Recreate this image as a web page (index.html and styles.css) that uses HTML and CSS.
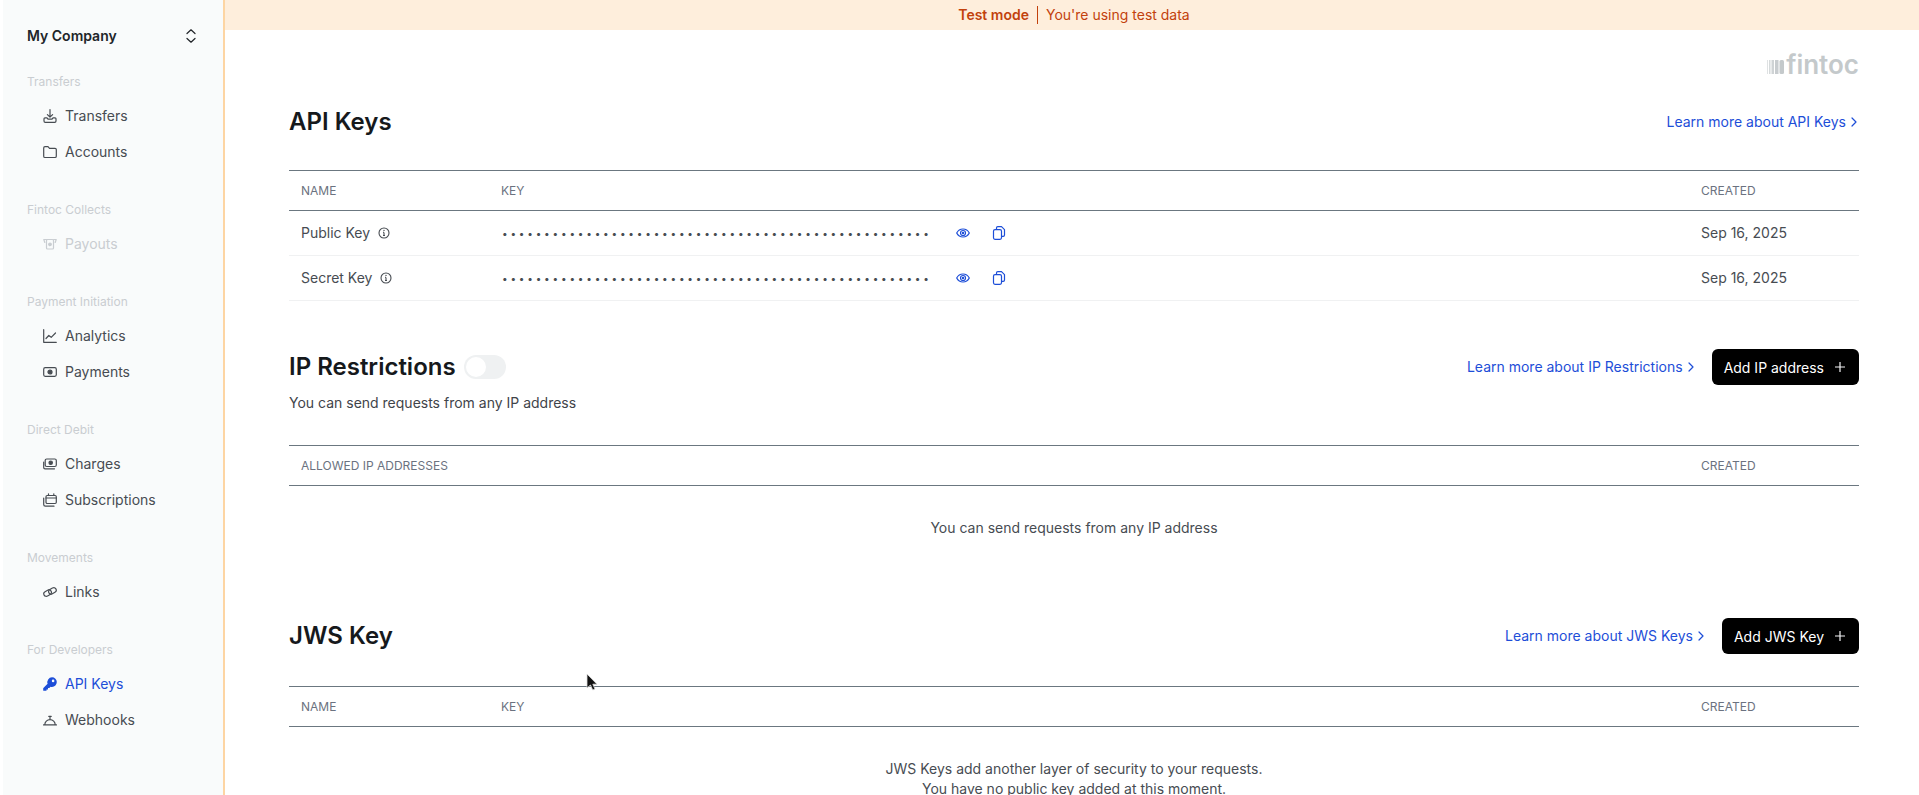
FILE: index.html
```html
<!DOCTYPE html>
<html lang="en">
<head>
    <meta charset="UTF-8">
    <title>API Keys</title>
    <link rel="stylesheet" href="styles.css">
</head>
<body>
    <aside class="sidebar">
        <div class="company">
            <span>My Company</span>
            <svg class="selector" viewBox="0 0 10 14" fill="none" stroke="#212529" stroke-width="1.2" stroke-linecap="round" stroke-linejoin="round"><path d="M1 4.500 5 .8l4 3.700M1 9.500l4 3.700 4-3.700"/></svg>
        </div>

        <div class="nav-group">
            <div class="nav-label">Transfers</div>
            <a class="nav-item"><svg class="nav-icon" viewBox="0 0 14 14"><path d="M7 .6v7.400M4.400 5.600 7 8.200l2.600-2.600M1 9.800c0-.6.400-1 1-1h2l1 1.300h4l1-1.300h2c.6 0 1 .4 1 1v2.200c0 .8-.5 1.300-1.300 1.300H2.300c-.8 0-1.300-.5-1.300-1.300z"/></svg>Transfers</a>
            <a class="nav-item"><svg class="nav-icon" viewBox="0 0 14 14"><path d="M.7 3c0-.8.500-1.300 1.300-1.300h3l1.500 1.600h5.500c.8 0 1.300.5 1.300 1.300v6.600c0 .8-.5 1.300-1.300 1.300H2c-.8 0-1.300-.5-1.300-1.300z"/></svg>Accounts</a>
        </div>

        <div class="nav-group">
            <div class="nav-label">Fintoc Collects</div>
            <a class="nav-item disabled"><svg class="nav-icon" viewBox="0 0 14 14"><path d="M3.500 3.500c0-.6.400-1 1-1h5c.6 0 1 .4 1 1v7.500c0 .6-.4 1-1 1h-5c-.6 0-1-.4-1-1zM.8 2.500h2.700M10.500 2.500h2.700M.8 2.500l1 3M13.200 2.500l-1 3"/><circle cx="7" cy="7.300" r="1.300" fill="currentColor"/></svg>Payouts</a>
        </div>

        <div class="nav-group">
            <div class="nav-label">Payment Initiation</div>
            <a class="nav-item"><svg class="nav-icon" viewBox="0 0 14 14"><path d="M.7.700v12.600h12.600M3 9.500l2.800-3 2.400 1.800L12.500 4"/></svg>Analytics</a>
            <a class="nav-item"><svg class="nav-icon" viewBox="0 0 14 14"><rect x=".7" y="2.700" width="12.600" height="8.600" rx="1.500"/><circle cx="7" cy="7" r="2" fill="currentColor"/></svg>Payments</a>
        </div>

        <div class="nav-group">
            <div class="nav-label">Direct Debit</div>
            <a class="nav-item"><svg class="nav-icon" viewBox="0 0 14 14"><rect x="2.200" y="2" width="11.100" height="7.500" rx="1.500"/><circle cx="7.700" cy="5.700" r="1.700" fill="currentColor"/><path d="M.7 5v5.500c0 .8.500 1.300 1.300 1.300h9.500"/></svg>Charges</a>
            <a class="nav-item"><svg class="nav-icon" viewBox="0 0 14 14"><rect x="3" y="2.500" width="10.300" height="8" rx="1.200"/><path d="M3 5h10.300M5.500 .8v1.700M10.800 .8v1.700M.7 5v6.500c0 1 .6 1.700 1.700 1.700h8.600"/></svg>Subscriptions</a>
        </div>

        <div class="nav-group">
            <div class="nav-label">Movements</div>
            <a class="nav-item"><svg class="nav-icon" viewBox="0 0 14 14"><rect x=".6" y="5.600" width="8" height="5" rx="2.500" transform="rotate(-30 4.600 8.100)"/><rect x="5.400" y="3.400" width="8" height="5" rx="2.500" transform="rotate(-30 9.400 5.900)"/></svg>Links</a>
        </div>

        <div class="nav-group">
            <div class="nav-label">For Developers</div>
            <a class="nav-item active"><svg class="nav-icon" viewBox="0 0 14 14"><path class="solid" d="M9 .3a4.800 4.800 0 0 1 4.800 4.800A4.800 4.800 0 0 1 9 9.900c-.5 0-1-.1-1.400-.2L6.300 11H5v1.400H3.500v1c0 .2-.2.400-.4.400H.7a.5.500 0 0 1-.5-.5v-2c0-.2.100-.3.200-.4l4.200-4.200A4.800 4.800 0 0 1 9 .3zm1.100 2.300a1.300 1.300 0 1 0 0 2.600 1.300 1.300 0 0 0 0-2.600z"/></svg>API Keys</a>
            <a class="nav-item"><svg class="nav-icon" viewBox="0 0 14 14"><path d="M.5 11.800h13M1.800 11.800a5.200 5.200 0 0 1 10.400 0M7 6.600V4M5.800 3.400h2.400"/></svg>Webhooks</a>
        </div>
    </aside>

    <div class="page">
        <div class="banner"><b>Test mode</b><span class="banner-sep"></span><span>You're using test data</span></div>

        <main class="content">
            <div class="logo-row">
                <svg class="logo-bars" viewBox="0 0 17 14"><rect x="0" y="0" width="1" height="14" fill="#dfe2e3"/><rect x="2" y="0" width="1.500" height="14" fill="#d6dadb"/><rect x="4.500" y="0" width="2.500" height="14" fill="#cfd3d5"/><rect x="8" y="0" width="3.500" height="14" fill="#c8cccf"/><rect x="12.500" y="0" width="4.500" height="14" rx="1.500" fill="#c4c9cb"/></svg>
                <span class="logo-text">fintoc</span>
            </div>

            <section class="api-section">
                <div class="section-head">
                    <h2>API Keys</h2>
                    <a class="learn">Learn more about API Keys<svg class="chev" viewBox="0 0 6 10"><path d="M1 1l4 4-4 4"/></svg></a>
                </div>
                <table class="data-table">
                    <tr><th class="col-name">Name</th><th>Key</th><th class="col-created">Created</th></tr>
                    <tr>
                        <td>Public Key<svg class="info" viewBox="0 0 12 12"><circle cx="6" cy="6" r="5"/><path d="M6 5.500v3M5 8.500h2M5 5.300h1"/><circle class="info-dot" cx="6" cy="3.400" r=".7"/></svg></td>
                        <td><div class="key-cell">
                            <span class="dots">•••••••••••••••••••••••••••••••••••••••••••••••••••</span>
                            <svg class="key-btn" viewBox="0 0 14 14"><path d="M.7 7C2 4.500 4.300 3 7 3s5 1.500 6.300 4C12 9.500 9.700 11 7 11S2 9.500.7 7z"/><circle cx="7" cy="7" r="2.500"/><circle class="key-fill" cx="7" cy="7" r="1.200"/></svg>
                            <svg class="key-btn" viewBox="0 0 14 14"><path d="M4.500 3.500V2c0-.8.500-1.300 1.300-1.300h3.700l3 3V9c0 .8-.5 1.300-1.300 1.300H9.500"/><rect x="1.500" y="3.700" width="8" height="9.600" rx="1.500"/></svg>
                        </div></td>
                        <td>Sep 16, 2025</td>
                    </tr>
                    <tr>
                        <td>Secret Key<svg class="info" viewBox="0 0 12 12"><circle cx="6" cy="6" r="5"/><path d="M6 5.500v3M5 8.500h2M5 5.300h1"/><circle class="info-dot" cx="6" cy="3.400" r=".7"/></svg></td>
                        <td><div class="key-cell">
                            <span class="dots">•••••••••••••••••••••••••••••••••••••••••••••••••••</span>
                            <svg class="key-btn" viewBox="0 0 14 14"><path d="M.7 7C2 4.500 4.300 3 7 3s5 1.500 6.300 4C12 9.500 9.700 11 7 11S2 9.500.7 7z"/><circle cx="7" cy="7" r="2.500"/><circle class="key-fill" cx="7" cy="7" r="1.200"/></svg>
                            <svg class="key-btn" viewBox="0 0 14 14"><path d="M4.500 3.500V2c0-.8.500-1.300 1.300-1.300h3.700l3 3V9c0 .8-.5 1.300-1.300 1.300H9.500"/><rect x="1.500" y="3.700" width="8" height="9.600" rx="1.500"/></svg>
                        </div></td>
                        <td>Sep 16, 2025</td>
                    </tr>
                </table>
            </section>

            <section class="ip-section">
                <div class="section-head">
                    <div class="title-toggle"><h2>IP Restrictions</h2><span class="toggle"><span class="knob"></span></span></div>
                    <div class="head-actions">
                        <a class="learn">Learn more about IP Restrictions<svg class="chev" viewBox="0 0 6 10"><path d="M1 1l4 4-4 4"/></svg></a>
                        <button class="btn-add">Add IP address<svg class="plus" viewBox="0 0 12 12"><path d="M6 1v10M1 6h10"/></svg></button>
                    </div>
                </div>
                <p class="subtitle">You can send requests from any IP address</p>
                <table class="data-table">
                    <tr><th>Allowed IP addresses</th><th class="col-created">Created</th></tr>
                </table>
                <p class="empty">You can send requests from any IP address</p>
            </section>

            <section class="jws-section">
                <div class="section-head">
                    <h2>JWS Key</h2>
                    <div class="head-actions">
                        <a class="learn">Learn more about JWS Keys<svg class="chev" viewBox="0 0 6 10"><path d="M1 1l4 4-4 4"/></svg></a>
                        <button class="btn-add">Add JWS Key<svg class="plus" viewBox="0 0 12 12"><path d="M6 1v10M1 6h10"/></svg></button>
                    </div>
                </div>
                <table class="data-table">
                    <tr><th class="col-name">Name</th><th>Key</th><th class="col-created">Created</th></tr>
                </table>
                <p class="empty">JWS Keys add another layer of security to your requests.<br>You have no public key added at this moment.</p>
            </section>
        </main>
    </div>

    <!-- mouse pointer caught in the screenshot -->
    <svg class="cursor" viewBox="0 0 13 19"><path d="M1 1v14l3.500-3 2.200 5 2.300-1-2.200-4.800H11z" fill="#111" stroke="#ddd" stroke-width=".8"/></svg>
</body>
</html>
```

FILE: styles.css
```css
* {
    box-sizing: border-box;
}
html, body {
    height: 100%;
}
body {
    margin: 0;
    display: flex;
    overflow: hidden;
    font-family: Inter, "Liberation Sans", sans-serif;
    font-size: 14px;
    line-height: 20px;
    color: #3f444a;
    background-color: #FFFFFF;
}

/* Sidebar */
.sidebar {
    width: 222px;
    margin-left: 3px;
    flex-shrink: 0;
    background-color: #F9FBFB;
    border-right: 2px solid #FDD5A3;
    padding: 26px 0 0 24px;
}
.company {
    display: flex;
    justify-content: space-between;
    align-items: center;
    height: 20px;
    padding-right: 27px;
    font-weight: 600;
    color: #212529;
}
.selector {
    width: 10px;
    height: 14px;
}
.nav-group {
    margin-bottom: 32px;
}
.company + .nav-group {
    margin-top: 28px;
}
.nav-label {
    height: 16px;
    line-height: 16px;
    font-size: 12px;
    color: #C9CDD1;
    margin-bottom: 8px;
}
.nav-item {
    display: flex;
    align-items: center;
    gap: 8px;
    height: 36px;
    padding-left: 16px;
    color: #474C52;
}
.nav-item.disabled {
    color: #C9CDD1;
}
.nav-item.active {
    color: #1D4ED8;
}
.nav-icon {
    width: 14px;
    height: 14px;
    flex-shrink: 0;
    fill: none;
    stroke: currentColor;
    stroke-width: 1.2;
    stroke-linecap: round;
    stroke-linejoin: round;
}
.nav-icon .solid {
    fill: currentColor;
    fill-rule: evenodd;
    stroke: none;
}

/* Main */
.page {
    flex: 1;
    min-width: 0;
}
.banner {
    display: flex;
    justify-content: center;
    align-items: center;
    height: 30px;
    padding-left: 4px;
    background-color: #FEEEDC;
    color: #C2410C;
}
.banner b {
    font-weight: 600;
}
.banner-sep {
    width: 1px;
    height: 18px;
    margin: 0 8px;
    background-color: #C2410C;
}
.content {
    padding: 0 60px 0 64px;
}
.logo-row {
    display: flex;
    justify-content: flex-end;
    align-items: center;
    gap: 2px;
    height: 30px;
    margin-top: 20px;
}
.logo-bars {
    width: 17px;
    height: 14px;
    margin-top: 3px;
}
.logo-text {
    font-size: 26px;
    font-weight: 600;
    color: #C4C9CB;
    line-height: 30px;
}
.section-head {
    display: flex;
    justify-content: space-between;
    align-items: center;
    height: 36px;
}
h2 {
    margin: 0;
    font-size: 24px;
    line-height: 32px;
    font-weight: 600;
    color: #16191C;
}
.api-section {
    margin-top: 24px;
}
.ip-section {
    margin-top: 48px;
}
.learn {
    display: inline-flex;
    align-items: center;
    color: #1D4ED8;
}
.chev {
    width: 6px;
    height: 10px;
    margin: 0 2px 0 5px;
    fill: none;
    stroke: currentColor;
    stroke-width: 1.200;
    stroke-linecap: round;
    stroke-linejoin: round;
}
.head-actions {
    display: flex;
    align-items: center;
    gap: 16px;
}
.btn-add {
    display: inline-flex;
    align-items: center;
    gap: 10px;
    height: 36px;
    padding: 0 13px 0 12px;
    background-color: #000000;
    color: #FFFFFF;
    border: 0;
    border-radius: 6px;
    font-family: inherit;
    font-size: 14px;
    font-weight: 400;
}
.plus {
    width: 12px;
    height: 12px;
    fill: none;
    stroke: #F3F4F6;
    stroke-width: 1.200;
}
.title-toggle {
    display: flex;
    align-items: center;
    gap: 8px;
}
.toggle {
    display: block;
    width: 42px;
    height: 24px;
    padding: 2px;
    border-radius: 12px;
    background-color: #EFF1F2;
}
.knob {
    display: block;
    width: 20px;
    height: 20px;
    border-radius: 50%;
    background-color: #FFFFFF;
}
.subtitle {
    margin: 8px 0 32px;
    height: 20px;
}

/* Tables */
.data-table {
    width: 100%;
    border-collapse: collapse;
    border-top: 1px solid #6B7780;
    border-bottom: 1px solid #6B7780;
}
.api-section .data-table {
    border-bottom: 0;
    margin-top: 30px;
}
.jws-section .data-table {
    margin-top: 32px;
}
.data-table th {
    height: 40px;
    padding: 0 12px;
    text-align: left;
    font-size: 12px;
    font-weight: 400;
    color: #6B7280;
    text-transform: uppercase;
    border-bottom: 1px solid #6B7780;
}
.data-table td {
    height: 45px;
    padding: 0 12px;
    border-bottom: 1px solid #F0F1F2;
    color: #474C52;
}
.col-name {
    width: 200px;
}
.col-created {
    width: 170px;
}
.info {
    width: 12px;
    height: 12px;
    margin-left: 8px;
    vertical-align: -1px;
    fill: none;
    stroke: #474C52;
    stroke-width: 1.1;
}
.info-dot {
    fill: #474C52;
    stroke: none;
}
.key-cell {
    display: flex;
    align-items: center;
    gap: 22px;
}
.dots {
    margin: 0 2px 0 1px;
    font-size: 10px;
    letter-spacing: 2.800px;
    white-space: nowrap;
    color: #474C52;
}
.key-btn {
    width: 14px;
    height: 14px;
    fill: none;
    stroke: #1D4ED8;
    stroke-width: 1.200;
    stroke-linejoin: round;
}
.key-fill {
    fill: #1D4ED8;
    stroke: none;
}
.empty {
    margin: 0;
    padding: 32px 0 0;
    text-align: center;
    color: #474C52;
}
.ip-section .empty {
    height: 132px;
}
.cursor {
    position: absolute;
    left: 586px;
    top: 673px;
    width: 13px;
    height: 19px;
}
```
